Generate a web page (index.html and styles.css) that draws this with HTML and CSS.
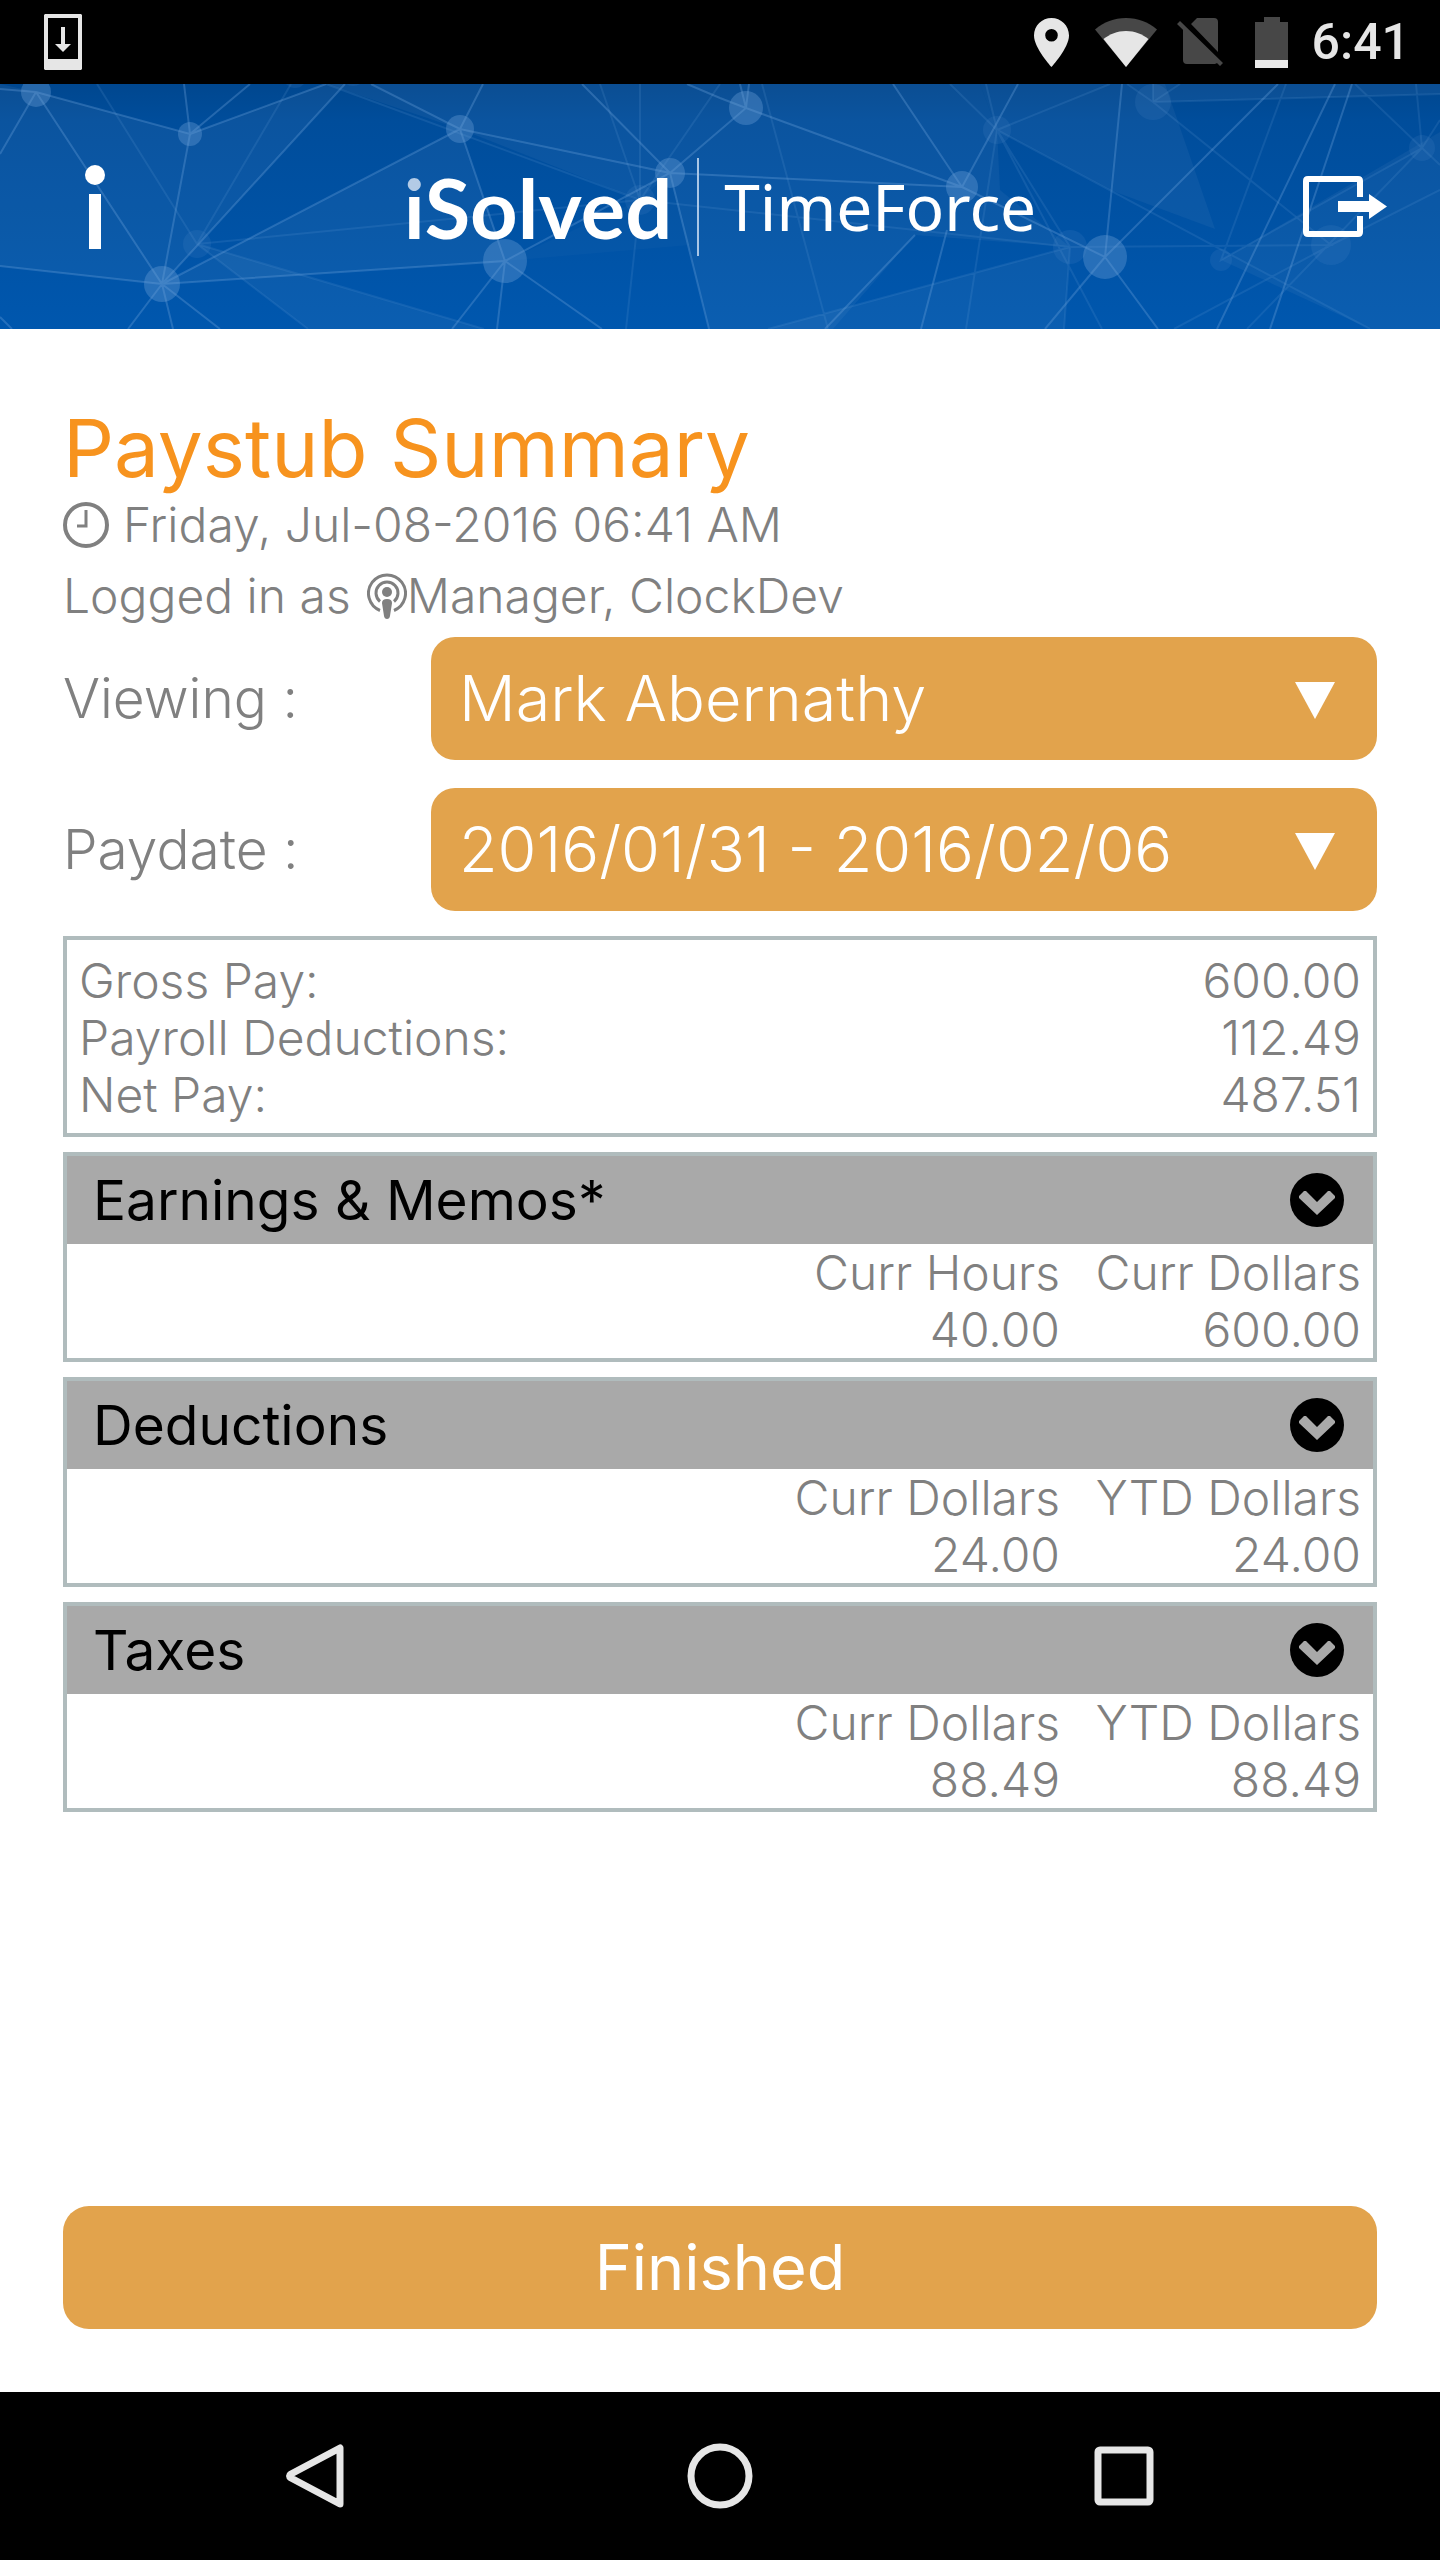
FILE: index.html
```html
<!DOCTYPE html>
<html lang="en">
<head>
<meta charset="utf-8">
<meta name="viewport" content="width=device-width, initial-scale=1">
<title>Paystub Summary</title>
<link rel="stylesheet" href="styles.css">
</head>
<body>
<div class="status-bar">
  <svg class="status-download" viewBox="0 0 38 56" width="38" height="56" aria-hidden="true"><path fill="#e6e6e6" fill-rule="evenodd" d="M1 0H37L38 1V55L37 56H1L0 55V1ZM4 4V45H34V4Z"/><path fill="#e6e6e6" d="M17 13h4v17h6l-8 8-8-8h6z"/></svg>
  <div class="status-icons">
    <svg viewBox="0 0 35 49" width="35" height="49" aria-hidden="true"><path fill="#e6e6e6" fill-rule="evenodd" d="M17.500 0C8 0 0 7.500 0 17.500 0 30 17.500 49 17.500 49S35 30 35 17.500C35 7.500 27 0 17.500 0ZM17.500 11a6.300 6.300 0 1 1 0 12.600 6.300 6.300 0 0 1 0-12.600Z"/></svg>
    <svg class="status-wifi" viewBox="0 0 62 49" width="62" height="49" aria-hidden="true"><path fill="#474747" d="M0 11.500C9 4 19 0 31 0s22 4 31 11.500L31 49Z"/><path fill="#e6e6e6" d="M8.500 21C15 16 22 13 31 13s16 3 22.500 8L31 49Z"/></svg>
    <svg viewBox="0 0 46 48" width="46" height="48" aria-hidden="true"><path fill="#474747" d="M20 0h17q4 0 4 4v30L14 6ZM6 9l34 36-2 1H10q-4 0-4-4ZM3 3l43 42-3 3L0 6Z"/></svg>
    <svg class="status-battery" viewBox="0 0 33 51" width="33" height="51" aria-hidden="true"><path fill="#474747" d="M9 0H25V5H33V43H0V5H9Z"/><path fill="#e9e9e9" d="M0 43H33V51H0Z"/></svg>
    <span class="status-time">6:41</span>
  </div>
</div>

<header class="app-header">
  <svg class="network" viewBox="0 84 1440 245" preserveAspectRatio="none" aria-hidden="true">
    <defs>
      <linearGradient id="sky" x1="0" y1="0" x2="0" y2="1"><stop offset="0" stop-color="#00478f"/><stop offset=".15" stop-color="#004d9b"/><stop offset="1" stop-color="#0057ae"/></linearGradient>
    </defs>
    <rect y="84" width="1440" height="245" fill="url(#sky)"/>
    <g fill="#fff" fill-opacity=".045">
      <path d="M0 84 36 92 190 134 326 84H345L162 284 0 266Z"/>
      <path d="M162 284 460 129 505 261Z"/>
      <path d="M197 244 484 329H308Z"/>
      <path d="M326 84H740L746 108 670 173 460 129Z"/>
      <path d="M460 129 640 200 670 173Z"/>
      <path d="M670 173 746 108 740 84H980L997 130 1000 190 1070 247 915 235 833 329H709Z"/>
      <path d="M505 261 640 200 670 173 690 245Z" fill-opacity=".02"/>
      <path d="M768 329 1070 247 1064 329Z"/>
      <path d="M980 84H1122L1110 190 997 130Z"/>
      <path d="M1122 84H1165L1215 229 1110 190Z"/>
      <path d="M1153 102 1440 94V84H1153Z"/>
      <path d="M1440 132 1221 260 1370 329H1440Z"/>
    </g>
    <g fill="none" stroke="#6fa6dc" stroke-opacity=".32" stroke-width="2">
      <path d="M0 89 36 92 190 134 184 84M190 134 250 84M190 134 326 84M36 92 0 154M36 92 162 284 0 266M190 134 162 284 345 84M162 284 460 129 371 84M460 129 483 84M162 284 505 261 460 129 670 173 505 261 452 329M505 261 497 329M505 261 602 329M162 284 128 329M162 284 173 329M162 284 220 329M0 317 12 329M670 173 582 84M670 173 746 108 740 84M746 108 720 98 687 84M746 108 749 84M670 173 962 187 746 108M670 173 709 329M962 187 893 84M962 187 1018 84M962 187 1105 257 1122 84M947 230 921 329M915 235 825 329M1105 257 1278 84M1105 257 1045 329M1105 257 1158 329M1335 84 1217 329M1352 84 1270 329"/>
    </g>
    <g fill="none" stroke="#6fa6dc" stroke-opacity=".15" stroke-width="2">
      <path d="M97 84 197 244 640 200 326 84M197 244 291 84M197 244 308 329M197 244 484 329M640 200 600 84M640 84V200L720 84M640 200 626 329M640 200 1070 247 768 329M997 130 950 84M997 130 1110 84M997 130 986 84M997 130 1370 329M997 130 1070 247 1064 329M997 130 966 329M997 130 1102 329M1153 102 1127 84M1153 102 1180 84M1153 102 1440 94M1153 102 1331 245 1070 247M1153 84V102M1286 84 1221 260 1422 148 1355 84M1422 148 1416 84M1422 148 1440 120M1422 148 1247 329M1422 148 1440 165M1440 190 1331 245 1174 329M762 84 828 329"/>
    </g>
    <g fill="#6ba0d8" fill-opacity=".36">
      <circle cx="36" cy="92" r="15"/><circle cx="190" cy="134" r="12"/><circle cx="460" cy="129" r="14"/><circle cx="162" cy="284" r="18"/><circle cx="505" cy="261" r="22"/><circle cx="670" cy="173" r="15"/><circle cx="746" cy="108" r="17"/><circle cx="962" cy="187" r="16"/><circle cx="1105" cy="257" r="22"/>
    </g>
    <g fill="#6ba0d8" fill-opacity=".12">
      <circle cx="197" cy="244" r="14"/><circle cx="640" cy="200" r="15"/><circle cx="997" cy="130" r="14"/><circle cx="1153" cy="102" r="18"/><circle cx="1070" cy="247" r="17"/><circle cx="1221" cy="260" r="11"/><circle cx="1331" cy="245" r="20"/><circle cx="1422" cy="148" r="13"/><circle cx="295" cy="76" r="12"/><circle cx="353" cy="72" r="14"/>
    </g>
  </svg>
  <button class="icon-button icon-info" type="button" aria-label="Information">
    <svg viewBox="0 0 20 84" width="20" height="84" aria-hidden="true"><circle cx="10" cy="10" r="10" fill="#fff"/><path fill="#fff" d="M4 29H16V84H4Z"/></svg>
  </button>
  <div class="brand">
    <span class="brand-name"><span class="brand-i">i</span>Solved</span>
    <span class="brand-rule"></span>
    <span class="brand-product">TimeForce</span>
  </div>
  <button class="icon-button icon-logout" type="button" aria-label="Log out">
    <svg viewBox="0 0 84 61" width="84" height="61" aria-hidden="true"><path fill="none" stroke="#fff" stroke-width="6" d="M57 21V5Q57 3 55 3H5Q3 3 3 5V56Q3 58 5 58H55Q57 58 57 56V40"/><path fill="#fff" d="M35 25H66V18L84 30.500 66 43V36H35Z"/></svg>
  </button>
</header>

<main class="page">
  <h1 class="title">Paystub Summary</h1>
  <p class="meta">
    <svg class="clock" viewBox="0 0 46 46" width="46" height="46" aria-hidden="true"><circle cx="23" cy="23" r="21" fill="none" stroke="#808080" stroke-width="4"/><path fill="none" stroke="#808080" stroke-width="3" d="M23 8V24H14"/></svg>
    <time datetime="2016-07-08T06:41">Friday, Jul-08-2016 06:41 AM</time>
  </p>
  <p class="meta">
    <span>Logged in as</span>
    <svg class="podcast" viewBox="0 0 40 46" width="40" height="46" aria-hidden="true"><g fill="none" stroke="#808080" stroke-width="3"><path d="M13 37.500A18.500 18.500 0 1 1 27 37.500"/><path d="M13 28.500A11 11 0 1 1 27 28.500"/></g><circle cx="20" cy="19" r="5" fill="#808080"/><path fill="#808080" d="M15 30Q15 26 20 26T25 30L23 43Q22.500 46 20 46T17 43Z"/></svg>
    <span>Manager, ClockDev</span>
  </p>

  <form class="filters">
    <label class="filter-label" for="viewing">Viewing :</label>
    <div class="select-wrap">
      <select class="select" id="viewing"><option>Mark Abernathy</option></select>
      <svg class="select-arrow" viewBox="0 0 40 37" width="40" height="37" aria-hidden="true"><path fill="#fff" d="M0 0H40L20 37Z"/></svg>
    </div>
    <label class="filter-label" for="paydate">Paydate :</label>
    <div class="select-wrap">
      <select class="select" id="paydate"><option>2016/01/31 - 2016/02/06</option></select>
      <svg class="select-arrow" viewBox="0 0 40 37" width="40" height="37" aria-hidden="true"><path fill="#fff" d="M0 0H40L20 37Z"/></svg>
    </div>
  </form>

  <div class="cards">
    <div class="card card-totals">
      <table class="totals">
        <tbody>
          <tr><th scope="row">Gross Pay:</th><td>600.00</td></tr>
          <tr><th scope="row">Payroll Deductions:</th><td>112.49</td></tr>
          <tr><th scope="row">Net Pay:</th><td>487.51</td></tr>
        </tbody>
      </table>
    </div>

    <section class="card">
      <button class="card-head" type="button"><span>Earnings &amp; Memos*</span>
        <svg viewBox="0 0 54 54" width="54" height="54" aria-hidden="true"><circle cx="27" cy="27" r="27"/><path fill="#a9a9a9" d="M27 42 9 25V23L14 18H16L27 29 38 18H40L45 23V25Z"/></svg>
      </button>
      <table class="amounts">
        <thead><tr><th scope="col">Curr Hours</th><th scope="col">Curr Dollars</th></tr></thead>
        <tbody><tr><td>40.00</td><td>600.00</td></tr></tbody>
      </table>
    </section>

    <section class="card">
      <button class="card-head" type="button"><span>Deductions</span>
        <svg viewBox="0 0 54 54" width="54" height="54" aria-hidden="true"><circle cx="27" cy="27" r="27"/><path fill="#a9a9a9" d="M27 42 9 25V23L14 18H16L27 29 38 18H40L45 23V25Z"/></svg>
      </button>
      <table class="amounts">
        <thead><tr><th scope="col">Curr Dollars</th><th scope="col">YTD Dollars</th></tr></thead>
        <tbody><tr><td>24.00</td><td>24.00</td></tr></tbody>
      </table>
    </section>

    <section class="card">
      <button class="card-head" type="button"><span>Taxes</span>
        <svg viewBox="0 0 54 54" width="54" height="54" aria-hidden="true"><circle cx="27" cy="27" r="27"/><path fill="#a9a9a9" d="M27 42 9 25V23L14 18H16L27 29 38 18H40L45 23V25Z"/></svg>
      </button>
      <table class="amounts">
        <thead><tr><th scope="col">Curr Dollars</th><th scope="col">YTD Dollars</th></tr></thead>
        <tbody><tr><td>88.49</td><td>88.49</td></tr></tbody>
      </table>
    </section>
  </div>

  <button class="finish" type="button">Finished</button>
</main>

<nav class="nav-bar" aria-label="System">
  <button class="nav-button" type="button" aria-label="Back"><svg viewBox="0 0 66 66" width="66" height="66" aria-hidden="true"><path fill="none" stroke="#e6e6e6" stroke-width="7" stroke-linejoin="round" d="M57 5V61L8 35Q5 33 8 31Z"/></svg></button>
  <button class="nav-button" type="button" aria-label="Home"><svg viewBox="0 0 66 66" width="66" height="66" aria-hidden="true"><circle cx="33" cy="33" r="29" fill="none" stroke="#e6e6e6" stroke-width="7"/></svg></button>
  <button class="nav-button" type="button" aria-label="Recent apps"><svg viewBox="0 0 66 66" width="66" height="66" aria-hidden="true"><rect x="7" y="7" width="52" height="52" rx="2" fill="none" stroke="#e6e6e6" stroke-width="7"/></svg></button>
</nav>
</body>
</html>
```
FILE: styles.css
```css
* { box-sizing: border-box; }

body {
  margin: 0;
  min-height: 100vh;
  display: flex;
  flex-direction: column;
  background: #fff;
  color: #808080;
  font: 300 48px/57px Inter, "Open Sans", sans-serif;
}

button {
  border: 0;
  padding: 0;
  background: none;
  font: inherit;
  color: inherit;
  cursor: pointer;
}

svg { display: block; flex: none; }

/* System status bar */
.status-bar {
  display: flex;
  align-items: center;
  justify-content: space-between;
  height: 84px;
  padding: 0 30px 0 44px;
  background: #000;
}
.status-icons { display: flex; align-items: center; gap: 20px; }
.status-wifi { margin-left: 6px; }
.status-battery { margin-left: 12px; }
.status-time { margin-left: 4px; color: #e6e6e6; font: 500 50px/88px Roboto, sans-serif; }

/* App header */
.app-header {
  position: relative;
  display: grid;
  grid-template-columns: 1fr auto 1fr;
  align-items: center;
  height: 245px;
}
.network { position: absolute; inset: 0; width: 100%; height: 100%; }
.icon-button { position: relative; display: flex; }
.icon-info { padding-left: 85px; }
.icon-logout { justify-content: flex-end; padding-right: 53px; }
.brand {
  position: relative;
  display: flex;
  align-items: center;
  gap: 25px;
  color: #fff;
}
.brand-name { font: 700 83px/98px Lato, sans-serif; }
.brand-i {
  background: linear-gradient(#b3cbe6 38%, #fff 38%);
  background-clip: text;
  -webkit-background-clip: text;
  color: transparent;
}
.brand-rule { width: 2px; height: 98px; background: #a9c6e6; }
.brand-product { font: 400 64px/94px "Noto Sans", sans-serif; }

/* Page */
.page {
  flex: 1;
  display: flex;
  flex-direction: column;
  padding: 78px 63px 63px;
}
.title {
  margin: 0;
  color: #f7931e;
  font-size: 80px;
  font-weight: 400;
  line-height: 82px;
}
.meta {
  display: flex;
  align-items: center;
  margin: 0;
  line-height: 71px;
}
.clock { margin-right: 14px; }
.podcast { margin-left: 16px; }

/* Filters */
.filters {
  display: grid;
  grid-template-columns: 28% 1fr;
  align-items: center;
  row-gap: 28px;
  margin: 6px 0 25px;
}
.filter-label { font-size: 55px; }
.select-wrap { position: relative; }
.select {
  appearance: none;
  display: block;
  width: 100%;
  height: 123px;
  padding: 0 96px 0 28px;
  border: 0;
  border-radius: 24px;
  background: #e2a34c;
  color: #fff;
  font: inherit;
  font-size: 63px;
  line-height: 123px;
}
.select-arrow {
  position: absolute;
  right: 42px;
  top: 45px;
  pointer-events: none;
}

/* Cards */
.cards { display: flex; flex-direction: column; gap: 15px; margin-bottom: 60px; }
.card { border: 4px solid #b0bcbd; }
.card-totals { padding: 12px 0 10px; }
.card-head {
  display: flex;
  align-items: center;
  justify-content: space-between;
  width: 100%;
  height: 88px;
  padding: 0 29px 0 26px;
  background: #a9a9a9;
  color: #000;
  font-size: 55px;
  font-weight: 400;
}
table { width: 100%; border-collapse: collapse; }
th, td { padding: 0; font-weight: 300; text-align: right; }
.totals th { padding-left: 12px; text-align: left; }
.totals td, .amounts td, .amounts th { padding-right: 12px; }
.amounts th:last-child { width: 301px; }

.finish {
  height: 123px;
  margin-top: auto;
  border-radius: 26px;
  background: #e2a34c;
  color: #fff;
  font-size: 63px;
  font-weight: 400;
}

/* System navigation */
.nav-bar {
  display: flex;
  align-items: center;
  justify-content: center;
  gap: 338px;
  height: 168px;
  background: #000;
}
```
